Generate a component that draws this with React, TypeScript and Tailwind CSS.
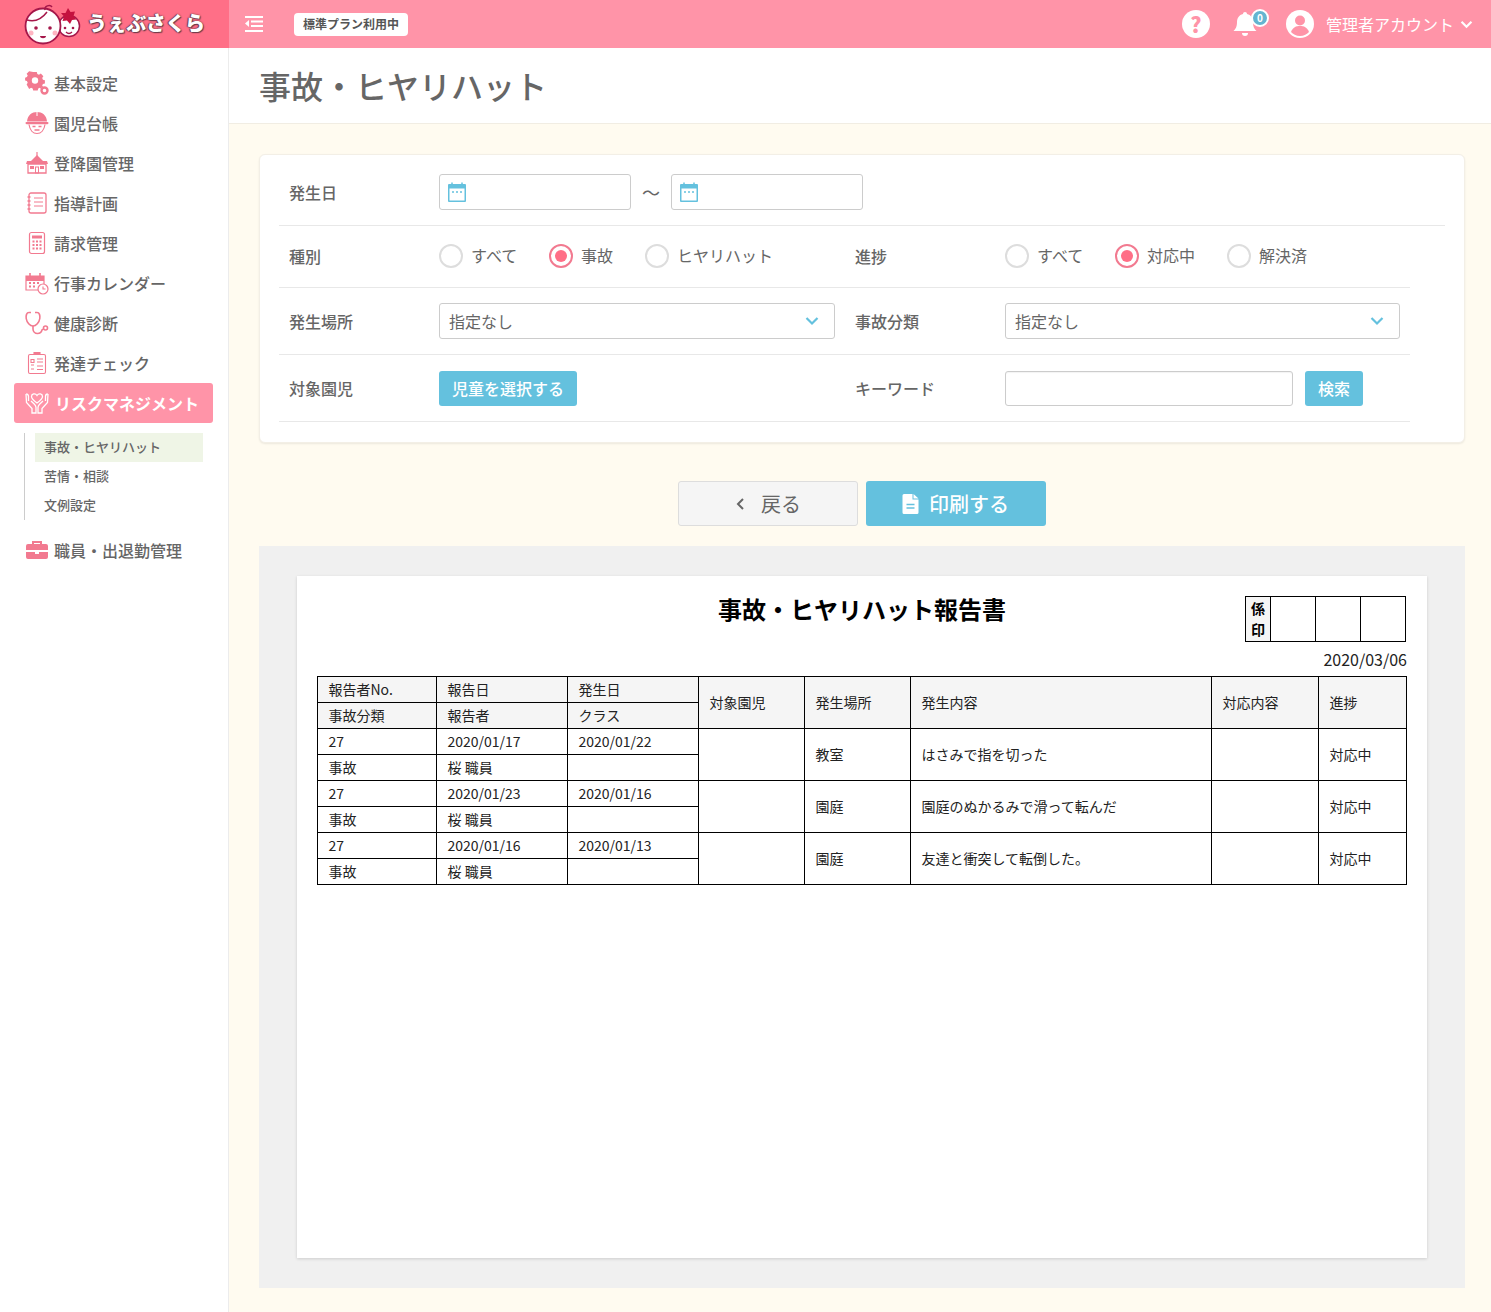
import React from "react";

const jp = "font-['Noto_Sans_CJK_JP','Noto_Sans',sans-serif]";

const GearIcon = () => (
  <svg viewBox="0 0 24 24" className="w-[24px] h-[24px]" fill="#f27a90">
    <path fillRule="evenodd" d="M8 1h4l.6 2.4 1.8.8 2.1-1.3 2.8 2.8-1.3 2.1.8 1.8 2.2.6v3.6l-2.2.6-.8 1.8 1 1.6-1 .2-1.6 1.6-1-.9-1.8.8-.6 2.3H8l-.6-2.3-1.8-.8-2.1 1.2L.7 15l1.2-2L1 11.200 -1 10.600V7.400L1 6.800l.9-1.800L.7 3.100 3.500 .3z" transform="translate(1 0) scale(.9)" />
    <circle cx="10" cy="9.500" r="3.200" fill="#fff" />
    <circle cx="19.500" cy="19.500" r="3" fill="none" stroke="#f27a90" strokeWidth="2.400" />
  </svg>
);

const HelmetIcon = () => (
  <svg viewBox="0 0 24 24" className="w-[24px] h-[24px]">
    <path d="M2 10.500C2.500 4 7 1 12 1s9.500 3 10 9.500z" fill="#f27a90" />
    <path d="M12 1v4" stroke="#fff" strokeWidth="1" />
    <rect x="0.500" y="11" width="23" height="2.200" rx="1.100" fill="#f27a90" />
    <path d="M4 13.500c.8 5.500 4 9 8 9s7.200-3.500 8-9" fill="none" stroke="#f27a90" strokeWidth="1.200" />
    <path d="M7.500 15.500h3M13.500 15.500h3" stroke="#f27a90" strokeWidth="1.500" />
    <path d="M9.500 19h5" stroke="#f27a90" strokeWidth="1.500" />
  </svg>
);

const SchoolIcon = () => (
  <svg viewBox="0 0 24 24" className="w-[24px] h-[24px]">
    <path d="M12 1v4" stroke="#f27a90" strokeWidth="1.200" />
    <path d="M12 4l6 6H6z" fill="#f27a90" />
    <path d="M2 10h7l3-1 3 1h7l1 3H1z" fill="#f27a90" />
    <path d="M3 13h18v9H3z" fill="none" stroke="#f27a90" strokeWidth="1.300" />
    <rect x="5" y="15" width="4" height="3" fill="#f27a90" />
    <rect x="15" y="15" width="4" height="3" fill="#f27a90" />
    <rect x="10.500" y="16" width="3" height="6" fill="none" stroke="#f27a90" strokeWidth="1" />
  </svg>
);

const NoteIcon = () => (
  <svg viewBox="0 0 24 24" className="w-[24px] h-[24px]" fill="none" stroke="#f27a90">
    <rect x="4" y="2" width="17" height="20" rx="2" strokeWidth="1.300" />
    <path d="M2.500 6h3M2.500 10h3M2.500 14h3M2.500 18h3" strokeWidth="1.300" />
    <path d="M9 7h9M9 11h9M9 15h9" strokeWidth="1" />
  </svg>
);

const CalcIcon = () => (
  <svg viewBox="0 0 24 24" className="w-[24px] h-[24px]">
    <rect x="4.500" y="1.500" width="15" height="21" rx="2" fill="none" stroke="#f27a90" strokeWidth="1.200" />
    <rect x="7" y="4.500" width="10" height="3" fill="#f27a90" />
    <path d="M7.500 10.500h2M11 10.500h2M14.500 10.500h2M7.500 14h2M11 14h2M14.500 14h2M7.500 17.500h2M11 17.500h2M14.500 17.500h2" stroke="#f27a90" strokeWidth="1.800" />
  </svg>
);

const CalClockIcon = () => (
  <svg viewBox="0 0 24 24" className="w-[24px] h-[24px]">
    <path d="M1 5h18v5H1z" fill="#f27a90" />
    <path d="M5 2v4M15 2v4" stroke="#f27a90" strokeWidth="1.600" />
    <path d="M1 5h18v14H1z" fill="none" stroke="#f27a90" strokeWidth="1.200" />
    <path d="M4 12h2M8 12h2M12 12h2M4 15.500h2M8 15.500h2" stroke="#f27a90" strokeWidth="2" />
    <circle cx="18" cy="18" r="5" fill="#fff" stroke="#f27a90" strokeWidth="1.200" />
    <path d="M18 15.500V18h2.500" fill="none" stroke="#f27a90" strokeWidth="1.100" />
  </svg>
);

const StethIcon = () => (
  <svg viewBox="0 0 24 24" className="w-[24px] h-[24px]" fill="none" stroke="#f27a90" strokeWidth="1.600">
    <path d="M6 1.500H4C1.500 1.500.8 4.500 1.200 7.500 1.800 11.500 5 15 8 15s6.200-3.500 6.800-7.500C15.200 4.500 14.500 1.500 12 1.500h-2" />
    <path d="M8 15v3c0 2.500 2 4.500 4.500 4.500 2.300 0 4-1.500 4.500-3.500l1-1" />
    <circle cx="20.500" cy="17" r="2" />
  </svg>
);

const ClipIcon = () => (
  <svg viewBox="0 0 24 24" className="w-[24px] h-[24px]" fill="none" stroke="#f27a90" strokeWidth="1.100">
    <rect x="3.500" y="3.500" width="17" height="19" rx="1.500" />
    <path d="M9 3.500h6V1.500H9z" fill="#f27a90" />
    <path d="M6 8.500h3v3H6zM6 14h3M6 18h3M12 8h6M12 11h6M12 15h6M12 18.500h6" />
  </svg>
);

const HandsIcon = () => (
  <svg viewBox="0 0 24 24" className="w-[24px] h-[24px]" fill="none" stroke="#fff" strokeWidth="1.300">
    <path d="M12 12C8.500 9.500 6.500 7.800 6.500 5.500 6.500 2.800 10.300 1.800 12 4.500 13.700 1.800 17.500 2.800 17.500 5.500 17.500 7.800 15.500 9.500 12 12z" />
    <path d="M1 3l.5 8.500L7 17.500V22h4v-5.500c0-1.500-.8-2.500-1.800-3.500L6 10" />
    <path d="M23 3l-.5 8.500L17 17.500V22h-4v-5.500c0-1.500.8-2.500 1.800-3.500L18 10" />
    <path d="M1.200 3c1.500 0 2.300 1 2.300 2.500v4.500M22.800 3c-1.500 0-2.300 1-2.300 2.500v4.500" />
  </svg>
);

const CaseIcon = () => (
  <svg viewBox="0 0 24 24" className="w-[24px] h-[24px]">
    <path d="M8 6V4h8v2" fill="none" stroke="#f27a90" strokeWidth="2" />
    <path d="M3 6h18a2 2 0 012 2v4H1V8a2 2 0 012-2zM1 14h9v2h4v-2h9v5a2 2 0 01-2 2H3a2 2 0 01-2-2z" fill="#f27a90" />
  </svg>
);

const CalendarIcon = () => (
  <svg viewBox="0 0 18 20" className="w-[18px] h-[20px]">
    <path d="M4 0.500v3M14 0.500v3" stroke="#64c1de" strokeWidth="1.500" />
    <rect x="0" y="2" width="18" height="18" rx="1" fill="#64c1de" />
    <rect x="1.500" y="6.500" width="15" height="12" fill="#fff" />
    <path d="M4 10h2M8 10h2M12 10h2" stroke="#64c1de" strokeWidth="1.600" />
  </svg>
);

const Chevron = () => (
  <svg viewBox="0 0 14 10" className="w-[14px] h-[10px]" fill="none" stroke="#64c1de" strokeWidth="2.200">
    <path d="M1.500 2L7 7.500 12.500 2" />
  </svg>
);

const Logo = () => (
  <svg viewBox="0 0 58 42" className="w-[58px] h-[42px]">
    <circle cx="46" cy="23" r="10.500" fill="#fff" stroke="#a5174a" strokeWidth="1.500" />
    <circle cx="20" cy="23" r="17.500" fill="#fff" stroke="#a5174a" strokeWidth="1.800" />
    <path d="M4 17c7 2 14 0 20-8M22 7c-1-4 5-6 7-3" fill="none" stroke="#a5174a" strokeWidth="1.500" />
    <circle cx="13" cy="25" r="1.800" fill="#a5174a" />
    <circle cx="27" cy="25" r="1.800" fill="#a5174a" />
    <path d="M17 33c0 3 6 3 6 0z" fill="#a5174a" />
    <circle cx="8" cy="30" r="2.500" fill="#ffb5c2" />
    <circle cx="32" cy="30" r="2.500" fill="#ffb5c2" />
    <path d="M45 5l2.500 4 4.500-.5-1.500 4.500 3 3.500-4.500.5L47 21l-3-3.500-4.500.5 1.500-4.500-3-3.500 4.500 0z" fill="#c4123f" />
    <circle cx="42" cy="25" r="1.300" fill="#a5174a" />
    <circle cx="50" cy="25" r="1.300" fill="#a5174a" />
    <path d="M43 29c2 2 4 2 6 0" fill="none" stroke="#a5174a" strokeWidth="1.300" />
  </svg>
);

const navItems = [
  { label: "基本設定", icon: <GearIcon /> },
  { label: "園児台帳", icon: <HelmetIcon /> },
  { label: "登降園管理", icon: <SchoolIcon /> },
  { label: "指導計画", icon: <NoteIcon /> },
  { label: "請求管理", icon: <CalcIcon /> },
  { label: "行事カレンダー", icon: <CalClockIcon /> },
  { label: "健康診断", icon: <StethIcon /> },
  { label: "発達チェック", icon: <ClipIcon /> },
];

const Header = () => (
  <header className="flex h-12 bg-[#ff94a8]">
    <div className="flex items-center w-[229px] bg-[#ff6f87] pl-[23px] gap-[6px]">
      <Logo />
      <span className="pb-[3px] text-[20px] font-black text-white tracking-[-0.4px] [text-shadow:0_0_2px_#6b3b49,1px_1px_1px_#6b3b49,-1px_0_1px_#6b3b49]">
        うぇぶさくら
      </span>
    </div>
    <div className="flex items-center flex-1">
      <svg viewBox="0 0 18 16" className="ml-[16px] w-[18px] h-[16px]" fill="none" stroke="#fff" strokeWidth="2">
        <path d="M0 1h18M6 5.500h12M6 10h12M0 15h18" />
        <path d="M4 4v7L0 7.500z" fill="#fff" stroke="none" />
      </svg>
      <div className="ml-[31px] flex items-center justify-center w-[114px] h-[23px] bg-white rounded-[4px] text-[12px] font-bold text-[#555]">
        標準プラン利用中
      </div>
      <div className="ml-auto flex items-center pr-[18px]">
        <div className="flex items-center justify-center w-[28px] h-[28px] rounded-full bg-white text-[#ff94a8] text-[21px] font-black leading-none">
          ?
        </div>
        <div className="relative ml-[23px] w-[24px] h-[28px]">
          <svg viewBox="0 0 24 28" className="w-[24px] h-[28px]" fill="#fff">
            <path d="M12 2c1.200 0 2 .8 2 2 4 1 6 4 6 8 0 5 1.500 7 3.500 9H.5C2.500 19 4 17 4 12c0-4 2-7 6-8 0-1.200.8-2 2-2z" />
            <path d="M9 23h6a3 3 0 01-6 0z" />
          </svg>
          <span className="absolute top-[-1px] left-[18px] flex items-center justify-center w-[18px] h-[18px] rounded-full bg-[#64b5d0] border-2 border-white text-[10px] font-bold leading-none text-white">
            0
          </span>
        </div>
        <svg viewBox="0 0 28 28" className="ml-[29px] w-[28px] h-[28px]">
          <circle cx="14" cy="14" r="14" fill="#fff" />
          <circle cx="14" cy="10.500" r="5" fill="#ff94a8" />
          <path d="M5 22c2-5 5-6 9-6s7 1 9 6c-2 2-5 4-9 4s-7-2-9-4z" fill="#ff94a8" />
        </svg>
        <span className="ml-[12px] text-[16px] text-white">管理者アカウント</span>
        <svg viewBox="0 0 14 10" className="ml-[6px] w-[13px] h-[9px]" fill="none" stroke="#fff" strokeWidth="2.400">
          <path d="M1.500 2L7 7.500 12.500 2" />
        </svg>
      </div>
    </div>
  </header>
);

const Sidebar = () => (
  <aside className="w-[229px] shrink-0 bg-white border-r border-[#ececec] pt-[15px] pl-[14px] pr-[15px] text-[#666]">
    {navItems.map((item) => (
      <div key={item.label} className="flex items-center h-[40px] pl-[11px] gap-[5px] text-[16px] font-medium">
        {item.icon}
        <span>{item.label}</span>
      </div>
    ))}
    <div className="flex items-center h-[40px] pl-[11px] gap-[6px] w-[199px] bg-[#ff94a8] rounded-[3px] text-[16px] font-bold text-white">
      <HandsIcon />
      <span>リスクマネジメント</span>
    </div>
    <div className="ml-[10px] mt-[10px] border-l border-[#ccc] pl-[10px] w-[179px] text-[13px] font-medium">
      <div className="flex items-center h-[29px] pl-[9px] pb-[2px] bg-[#eff5e6]">事故・ヒヤリハット</div>
      <div className="flex items-center h-[29px] pl-[9px] pb-[2px]">苦情・相談</div>
      <div className="flex items-center h-[29px] pl-[9px] pb-[2px]">文例設定</div>
    </div>
    <div className="flex items-center h-[40px] mt-[10px] pl-[11px] gap-[5px] text-[16px] font-medium">
      <CaseIcon />
      <span>職員・出退勤管理</span>
    </div>
  </aside>
);

const Radio = ({ label, checked, width }: { label: string; checked?: boolean; width: string }) => (
  <label className={`flex items-center gap-[8px] ${width}`}>
    <span className={`flex items-center justify-center w-[24px] h-[24px] rounded-full border-2 bg-white ${checked ? "border-[#f27a90]" : "border-[#ddd]"}`}>
      {checked && <span className="w-[12px] h-[12px] rounded-full bg-[#ff6f87]" />}
    </span>
    <span className="pb-[2px] text-[16px] text-[#666]">{label}</span>
  </label>
);

const Select = ({ w }: { w: string }) => (
  <div className={`flex items-center justify-between h-[36px] ${w} pl-[9px] pr-[15px] bg-white border border-[#ccc] rounded-[3px] text-[16px] text-[#666]`}>
    指定なし
    <Chevron />
  </div>
);

const DateInput = () => (
  <div className="flex items-center w-[192px] h-[36px] pl-[8px] bg-white border border-[#ccc] rounded-[3px]">
    <CalendarIcon />
  </div>
);

const FilterCard = () => (
  <section className="h-[289px] bg-white rounded-[6px] border border-[#f3efe6] shadow-[0_1px_2px_rgba(0,0,0,0.08)] px-[19px] text-[#666]">
    <div className="flex items-center h-[71px] pt-[4px] w-[1166px] border-b border-[#e8e8e8]">
      <div className="w-[160px] pl-[10px] text-[16px] font-medium">発生日</div>
      <DateInput />
      <div className="w-[40px] text-center text-[18px]">〜</div>
      <DateInput />
    </div>
    <div className="flex items-center h-[62px] pb-[2px] w-[1131px] border-b border-[#e8e8e8]">
      <div className="w-[160px] pl-[10px] text-[16px] font-medium">種別</div>
      <div className="flex w-[416px]">
        <Radio label="すべて" width="w-[110px]" />
        <Radio label="事故" checked width="w-[96px]" />
        <Radio label="ヒヤリハット" width="w-[150px]" />
      </div>
      <div className="w-[150px] text-[16px] font-medium">進捗</div>
      <div className="flex">
        <Radio label="すべて" width="w-[110px]" />
        <Radio label="対応中" checked width="w-[112px]" />
        <Radio label="解決済" width="w-[100px]" />
      </div>
    </div>
    <div className="flex items-center h-[67px] w-[1131px] border-b border-[#e8e8e8]">
      <div className="w-[160px] pl-[10px] text-[16px] font-medium">発生場所</div>
      <Select w="w-[396px]" />
      <div className="ml-[20px] w-[150px] text-[16px] font-medium">事故分類</div>
      <Select w="w-[395px]" />
    </div>
    <div className="flex items-center h-[67px] w-[1131px] border-b border-[#e8e8e8]">
      <div className="w-[160px] pl-[10px] text-[16px] font-medium">対象園児</div>
      <button className="w-[138px] h-[35px] bg-[#64c1de] rounded-[3px] text-[16px] font-medium text-white">児童を選択する</button>
      <div className="ml-[278px] w-[150px] text-[16px] font-medium">キーワード</div>
      <div className="w-[288px] h-[35px] bg-white border border-[#ccc] rounded-[3px] shadow-[inset_0_1px_1px_rgba(0,0,0,0.05)]" />
      <button className="ml-[12px] w-[58px] h-[35px] bg-[#64c1de] rounded-[3px] text-[16px] font-medium text-white">検索</button>
    </div>
  </section>
);

const Actions = () => (
  <div className="flex justify-center gap-[8px] mt-[38px]">
    <button className="flex items-center justify-center gap-[16px] w-[180px] h-[45px] bg-[#f5f5f5] border border-[#ddd] rounded-[3px] text-[20px] text-[#666]">
      <svg viewBox="0 0 10 14" className="w-[10px] h-[14px]" fill="none" stroke="#666" strokeWidth="2">
        <path d="M8 2L3 7l5 5" />
      </svg>
      戻る
    </button>
    <button className="flex items-center justify-center gap-[10px] w-[180px] h-[45px] pr-[1px] bg-[#64c1de] rounded-[3px] text-[20px] font-medium text-white">
      <svg viewBox="0 0 16 20" className="w-[17px] h-[20px]">
        <path d="M1.500 0H10v5.500h6v13a1.500 1.500 0 01-1.500 1.500h-13A1.500 1.500 0 010 18.500v-17A1.500 1.500 0 011.500 0z" fill="#fff" />
        <path d="M11 0l5 4.500h-5z" fill="#fff" />
        <path d="M4 10.500h8M4 14h8" stroke="#64c1de" strokeWidth="1.500" />
      </svg>
      印刷する
    </button>
  </div>
);

const reports = [
  { reported: "2020/01/17", occurred: "2020/01/22", place: "教室", body: "はさみで指を切った" },
  { reported: "2020/01/23", occurred: "2020/01/16", place: "園庭", body: "園庭のぬかるみで滑って転んだ" },
  { reported: "2020/01/16", occurred: "2020/01/13", place: "園庭", body: "友達と衝突して転倒した。" },
];

const th = "h-[26px] border border-black bg-[#f5f5f5] pl-[10.5px] pb-[2px] text-left font-normal";
const td = "h-[26px] border border-black pl-[10.5px] pb-[2px] text-left font-normal";

const ReportTable = () => (
  <table className="w-[1089px] table-fixed border-collapse text-[14px] leading-none text-[#222]">
    <colgroup>
      <col className="w-[119px]" />
      <col className="w-[131px]" />
      <col className="w-[131px]" />
      <col className="w-[106px]" />
      <col className="w-[106px]" />
      <col className="w-[301px]" />
      <col className="w-[107px]" />
      <col className="w-[88px]" />
    </colgroup>
    <thead>
      <tr>
        <th className={th}>報告者No.</th>
        <th className={th}>報告日</th>
        <th className={th}>発生日</th>
        <th rowSpan={2} className={th}>対象園児</th>
        <th rowSpan={2} className={th}>発生場所</th>
        <th rowSpan={2} className={th}>発生内容</th>
        <th rowSpan={2} className={th}>対応内容</th>
        <th rowSpan={2} className={th}>進捗</th>
      </tr>
      <tr>
        <th className={th}>事故分類</th>
        <th className={th}>報告者</th>
        <th className={th}>クラス</th>
      </tr>
    </thead>
    <tbody>
      {reports.map((r) => (
        <React.Fragment key={r.reported}>
          <tr>
            <td className={td}>27</td>
            <td className={td}>{r.reported}</td>
            <td className={td}>{r.occurred}</td>
            <td rowSpan={2} className={td} />
            <td rowSpan={2} className={td}>{r.place}</td>
            <td rowSpan={2} className={td}>{r.body}</td>
            <td rowSpan={2} className={td} />
            <td rowSpan={2} className={td}>対応中</td>
          </tr>
          <tr>
            <td className={td}>事故</td>
            <td className={td}>桜 職員</td>
            <td className={td} />
          </tr>
        </React.Fragment>
      ))}
    </tbody>
  </table>
);

const Paper = () => (
  <section className="mt-[20px] h-[742px] bg-[#f0f0f0] px-[38px] pt-[30px]">
    <div className="h-[682px] bg-white shadow-[0_1px_3px_rgba(0,0,0,0.15)] p-[20px]">
      <div className="relative h-[46px]">
        <h2 className="text-center text-[24px] leading-[26px] font-bold text-black">事故・ヒヤリハット報告書</h2>
        <div className="absolute top-0 right-[1px] flex h-[46px] border border-black text-black">
          <div className="flex flex-col items-center justify-center w-[25px] pb-[1px] bg-[#f5f5f5] border-r border-black text-[14px] font-bold leading-[21px]">
            <span>係</span>
            <span>印</span>
          </div>
          <div className="w-[45px] border-r border-black" />
          <div className="w-[45px] border-r border-black" />
          <div className="w-[44px]" />
        </div>
      </div>
      <div className="h-[34px] pt-[6px] text-right text-[16px] leading-[22px] text-[#222]">2020/03/06</div>
      <ReportTable />
    </div>
  </section>
);

export default function App() {
  return (
    <div className={`${jp} flex flex-col min-h-[1312px] bg-white`}>
      <Header />
      <div className="flex flex-1">
        <Sidebar />
        <main className="flex-1 min-w-0 bg-[#fffbf0]">
          <div className="flex items-center h-[76px] pl-[30px] pb-[2px] bg-white border-b border-[#f1ede3]">
            <h1 className="text-[32px] font-medium text-[#666]">事故・ヒヤリハット</h1>
          </div>
          <div className="pl-[30px] pr-[26px] pt-[30px] pb-[24px]">
            <FilterCard />
            <Actions />
            <Paper />
          </div>
        </main>
      </div>
    </div>
  );
}
